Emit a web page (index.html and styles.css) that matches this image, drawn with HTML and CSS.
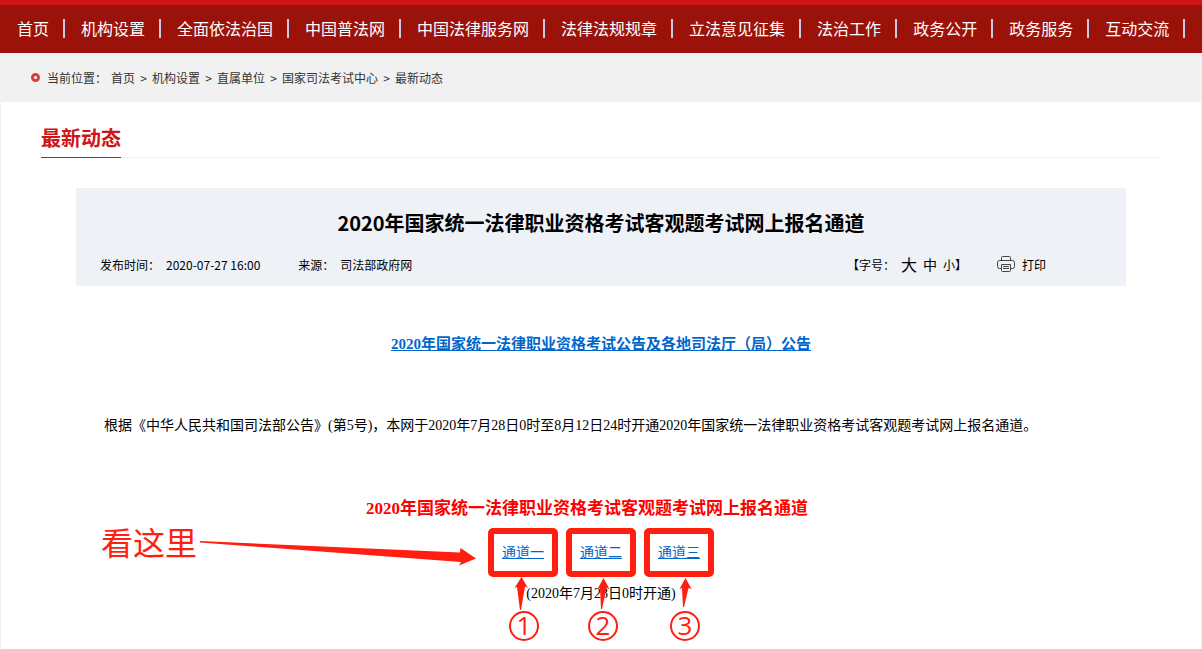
FILE: index.html
```html
<!DOCTYPE html>
<html lang="zh-CN">
<head>
    <meta charset="UTF-8">
    <meta name="viewport" content="width=device-width, initial-scale=1.0">
    <title>2020年国家统一法律职业资格考试客观题考试网上报名通道</title>
    <link rel="stylesheet" href="styles.css">
</head>
<body>
    <nav class="nav">
        <ul>
            <li><a href="#">首页</a></li>
            <li><a href="#">机构设置</a></li>
            <li><a href="#">全面依法治国</a></li>
            <li><a href="#">中国普法网</a></li>
            <li><a href="#">中国法律服务网</a></li>
            <li><a href="#">法律法规规章</a></li>
            <li><a href="#">立法意见征集</a></li>
            <li><a href="#">法治工作</a></li>
            <li><a href="#">政务公开</a></li>
            <li><a href="#">政务服务</a></li>
            <li><a href="#">互动交流</a></li>
        </ul>
    </nav>

    <div class="crumbs">
        <span class="dot"></span>
        <span class="label">当前位置：</span>
        <a href="#">首页</a><i>&gt;</i><a href="#">机构设置</a><i>&gt;</i><a href="#">直属单位</a><i>&gt;</i><a href="#">国家司法考试中心</a><i>&gt;</i><a href="#">最新动态</a>
    </div>

    <main class="main">
        <div class="column-title">
            <h2>最新动态</h2>
        </div>

        <div class="article">
            <div class="article-head">
                <h1>2020年国家统一法律职业资格考试客观题考试网上报名通道</h1>
                <div class="meta">
                    <span class="time">发布时间：<time>2020-07-27 16:00</time></span>
                    <span class="source">来源：<span>司法部政府网</span></span>
                    <div class="size">
                        <span>【字号：</span>
                        <button class="big" type="button">大</button>
                        <button class="mid" type="button">中</button>
                        <button class="small" type="button">小</button><span>】</span>
                    </div>
                    <button class="print" type="button">
                        <svg width="18" height="16" viewBox="0 0 18 16" fill="none" stroke="#444">
                            <path d="M4.500 4.500V1.500Q4.500 .500 5.500 .500H12.500Q13.500 .500 13.500 1.500V4.500"/>
                            <path d="M4 12.500H2.500Q.500 12.500 .500 10.500V6.500Q.500 4.500 2.500 4.500H15.500Q17.500 4.500 17.500 6.500V10.500Q17.500 12.500 15.500 12.500H14"/>
                            <path d="M4.500 8.500H13.500V14.500Q13.500 15.500 12.500 15.500H5.500Q4.500 15.500 4.500 14.500ZM6 10.500H12M6 12.500H12"/>
                        </svg>
                        打印
                    </button>
                </div>
            </div>

            <p class="notice"><a href="#">2020年国家统一法律职业资格考试公告及各地司法厅（局）公告</a></p>
            <p class="text">根据《中华人民共和国司法部公告》(第5号)，本网于2020年7月28日0时至8月12日24时开通2020年国家统一法律职业资格考试客观题考试网上报名通道。</p>

            <div class="channels">
                <h3>2020年国家统一法律职业资格考试客观题考试网上报名通道</h3>
                <div class="links">
                    <span><a href="#">通道一</a></span>
                    <span><a href="#">通道二</a></span>
                    <span><a href="#">通道三</a></span>
                </div>
                <p class="open">(2020年7月28日0时开通)</p>

                <!-- hand-drawn hints over the links -->
                <svg class="hints" width="620" height="148" viewBox="0 0 620 148">
                    <text class="look" x="1" y="60">看这里</text>
                    <path d="M100 46L360 57.500L360.500 53L376 63.500L359 70.500L361 67L100 47.500Z"/>
                    <path d="M421.500 82L428 93L425 91.500L421 115H420L417 92L414.500 93Z"/>
                    <path d="M503.500 83L509.500 94L506.500 93L502 114H501L500 93L497.500 94Z"/>
                    <path d="M585.500 83L591.500 94L588.500 93L584 112H583L582 93L579.500 94Z"/>
                    <circle cx="424" cy="131" r="14"/>
                    <circle cx="503" cy="131" r="14"/>
                    <circle cx="585" cy="131" r="14"/>
                    <text class="num" x="424" y="140">1</text>
                    <text class="num" x="503" y="140">2</text>
                    <text class="num" x="585" y="140">3</text>
                </svg>
            </div>
        </div>
    </main>
</body>
</html>
```
FILE: styles.css
```css
* {
    margin: 0;
    padding: 0;
    box-sizing: border-box;
}
body {
    display: flex;
    flex-direction: column;
    min-height: 100vh;
    background-color: #fff;
    color: #000;
    font-family: "Noto Sans CJK SC", sans-serif;
    font-size: 12px;
}
a {
    color: inherit;
    text-decoration: none;
}
button {
    border: none;
    background: none;
    color: inherit;
    font-family: inherit;
    font-size: 12px;
    cursor: pointer;
}

/* top menu */
.nav {
    border-top: 5px solid #cf1515;
    background-color: #9b120a;
    overflow: hidden;
}
.nav ul {
    display: flex;
    height: 48px;
    padding: 14px 0 0 1px;
    list-style: none;
}
.nav li {
    flex: none;
    height: 19px;
    padding: 0 14px 0 16px;
    border-right: 2px solid #c9cbe6;
    color: #fff;
    font-size: 16px;
    line-height: 18px;
}

/* breadcrumb */
.crumbs {
    display: flex;
    align-items: center;
    height: 49px;
    padding-left: 31px;
    background-color: #f1f1f1;
    color: #333;
    line-height: 16px;
    white-space: nowrap;
}
.crumbs .dot {
    width: 9px;
    height: 9px;
    margin-right: 7px;
    border: 3px solid #d0403f;
    border-radius: 50%;
    background-color: #fff;
}
.crumbs .label {
    margin-right: 4px;
}
.crumbs i {
    width: 17px;
    font-style: normal;
    text-align: center;
}

.main {
    flex: 1;
    padding: 0 40px;
    border: 1px solid #f1f1f1;
    border-width: 0 1px;
}
.column-title {
    display: flex;
    height: 56px;
    border-bottom: 1px solid #f1f1f1;
}
.column-title h2 {
    height: 56px;
    padding-top: 16px;
    border-bottom: 1px solid #cf1515;
    color: #cf1515;
    font-size: 20px;
    line-height: 40px;
}
.article {
    padding: 30px 35px 0;
}
.article-head {
    height: 98px;
    padding: 20px 80px 0 24px;
    background-color: #eef1f6;
}
.article-head h1 {
    margin-right: -56px;
    font-size: 20px;
    line-height: 30px;
    text-align: center;
}
.meta {
    display: flex;
    align-items: center;
    height: 24px;
    margin-top: 14px;
    white-space: nowrap;
}
.meta time, .source span {
    margin-left: 6px;
}
.source {
    margin-left: 38px;
}
.size {
    display: flex;
    align-items: center;
    margin-left: auto;
}
.size .big {
    margin: 0 6px;
    font-size: 16px;
}
.size .mid {
    margin-right: 6px;
    font-size: 14px;
}
.print {
    display: flex;
    align-items: center;
    gap: 7px;
    margin-left: 30px;
}

/* body text */
.notice, .text, .channels {
    font-family: "Liberation Serif", "Noto Sans CJK SC", serif;
    font-size: 14px;
    line-height: 28px;
}
.notice {
    margin-top: 44px;
    font-size: 15px;
    font-weight: bold;
    text-align: center;
}
.notice a, .links a {
    color: #06c;
    text-decoration: underline;
}
.text {
    margin-top: 54px;
    text-indent: 2em;
}
.channels {
    position: relative;
    margin-top: 55px;
    text-align: center;
}
.channels h3 {
    padding-right: 28px;
    color: #f00;
    font-size: 17px;
}
.links {
    display: flex;
    justify-content: center;
    gap: 8px;
    margin: 5px 0 3px;
}
.links span {
    width: 70px;
    height: 49px;
    border: 6px solid #ff1e10;
    border-radius: 5px;
    line-height: 38px;
}
.hints {
    position: absolute;
    top: 0;
    left: 50%;
    margin-left: -501px;
    fill: #ff1e10;
    font-family: "Noto Sans CJK SC", sans-serif;
    pointer-events: none;
}
.hints circle {
    fill: none;
    stroke: #ff1e10;
    stroke-width: 2;
}
.hints .look {
    font-size: 32px;
}
.hints .num {
    font-family: "Open Sans", sans-serif;
    font-size: 26px;
    text-anchor: middle;
}
```
